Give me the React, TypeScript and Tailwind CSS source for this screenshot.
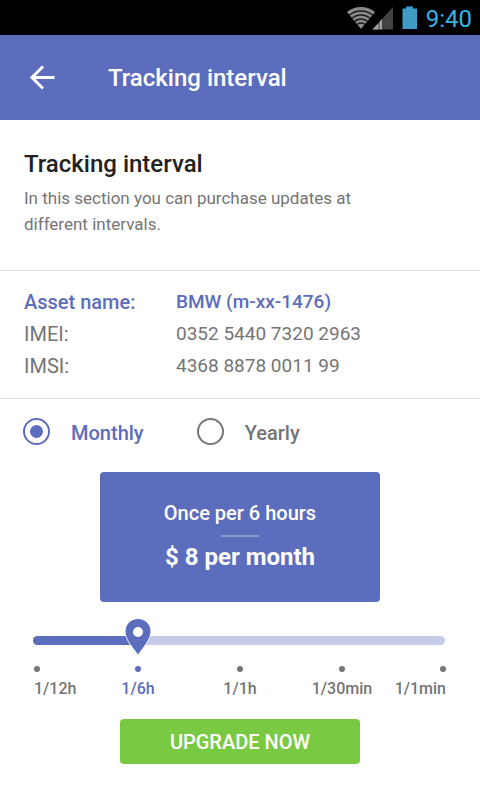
import { useState } from "react";

const intervals = [
  { label: "1/12h", title: "Once per 12 hours", price: 4 },
  { label: "1/6h", title: "Once per 6 hours", price: 8 },
  { label: "1/1h", title: "Once per hour", price: 16 },
  { label: "1/30min", title: "Once per 30 minutes", price: 24 },
  { label: "1/1min", title: "Once per minute", price: 40 },
];

const asset = [
  { name: "Asset name:", value: "BMW (m-xx-1476)", strong: true },
  { name: "IMEI:", value: "0352 5440 7320 2963", strong: false },
  { name: "IMSI:", value: "4368 8878 0011 99", strong: false },
];

function StatusBar() {
  return (
    <div className="flex h-[35px] items-center justify-end bg-black pr-2">
      <svg width="48" height="24" viewBox="0 0 48 24" aria-hidden="true">
        <clipPath id="wifi-fan">
          <path d="M1 6A22 22 0 0 1 29 6L15 23Z" />
        </clipPath>
        <g clipPath="url(#wifi-fan)">
          <rect width="30" height="24" fill="#8b8b8b" />
          <g fill="none" stroke="#1c1c1c" strokeWidth="1.3">
            <circle cx="15" cy="23" r="18" />
            <circle cx="15" cy="23" r="14" />
            <circle cx="15" cy="23" r="10" />
            <circle cx="15" cy="23" r="6" />
          </g>
        </g>
        <path d="M47 1V23.500H26.500Z" fill="#424242" />
        <path d="M26.500 23.500L32.500 16.900V23.500Z" fill="#a0a0a0" />
        <path d="M33.500 15.800L36 13V23.500H33.500Z" fill="#a0a0a0" />
      </svg>
      <svg className="ml-2" width="16" height="24" viewBox="0 0 16 24" aria-hidden="true">
        <path d="M4 0.500H11V2.500H15V23H0.500V2.500H4Z" fill="#3f9cc6" />
      </svg>
      <span className="ml-2 pt-0.5 text-2xl text-[#33b5e5]">9:40</span>
    </div>
  );
}

function Pin() {
  return (
    <svg width="30" height="38" viewBox="0 0 30 38" aria-hidden="true">
      <path
        d="M15 1C8 1 2.500 6.400 2.500 13.300C2.500 21.500 10.500 30 15 36.500C19.500 30 27.500 21.500 27.500 13.300C27.500 6.400 22 1 15 1Z"
        fill="#5c6dbd"
        stroke="#fff"
        strokeWidth="2"
        paintOrder="stroke"
      />
      <circle cx="15" cy="14" r="5" fill="#fff" />
    </svg>
  );
}

export default function App() {
  const [plan, setPlan] = useState("Monthly");
  const [step, setStep] = useState(1);
  const current = intervals[step];
  const percent = `${(step / (intervals.length - 1)) * 100}%`;

  return (
    <div className="min-h-screen bg-white font-['Roboto',sans-serif] text-[#757575]">
      <StatusBar />
      <header className="flex h-[85px] items-center bg-[#5c6dbd] pl-7 text-white">
        <button type="button" aria-label="Back" className="flex size-7 items-center justify-center">
          <svg width="28" height="28" viewBox="0 0 28 28" fill="none" stroke="currentColor" strokeWidth="3" aria-hidden="true">
            <path d="M26.500 13.500H4M15 2.500L4 13.500L15 24.500" />
          </svg>
        </button>
        <h1 className="ml-[52px] text-2xl font-medium">Tracking interval</h1>
      </header>

      <main>
        <section className="border-b border-[#e0e0e0] px-6 pt-7 pb-[33px]">
          <h2 className="text-2xl font-medium text-[#212121]">Tracking interval</h2>
          <p className="mt-[5px] max-w-[350px] text-[17px] leading-[26px]">
            In this section you can purchase updates at different intervals.
          </p>
        </section>

        <dl className="border-b border-[#e0e0e0] px-6 pt-[15px] pb-4 text-xl leading-8">
          {asset.map((row) => (
            <div key={row.name} className={row.strong ? "flex font-medium text-[#5c6dbd]" : "flex"}>
              <dt className="w-[152px]">{row.name}</dt>
              <dd className="text-[19px]">{row.value}</dd>
            </div>
          ))}
        </dl>

        <fieldset className="flex gap-[53px] px-[23px] pt-4 text-xl font-medium">
          {["Monthly", "Yearly"].map((name) => (
            <label key={name} className="flex items-center has-checked:text-[#5c6dbd]">
              <input
                type="radio"
                name="plan"
                value={name}
                checked={plan === name}
                onChange={() => setPlan(name)}
                className="grid size-[27px] appearance-none place-items-center rounded-full border-2 border-current before:size-[13px] before:rounded-full checked:before:bg-current"
              />
              <span className="ml-[21px] pt-1">{name}</span>
            </label>
          ))}
        </fieldset>

        <section className="mx-[100px] mt-[25px] flex h-[130px] flex-col items-center rounded bg-[#5c6dbd] pt-[27px] text-white">
          <p className="text-xl leading-7 font-medium">{current.title}</p>
          <hr className="mt-2 w-[38px] border-t-2 border-[#8b98d0]" />
          <p className="mt-1 text-2xl font-bold">$ {current.price} per {plan === "Monthly" ? "month" : "year"}</p>
        </section>

        <div className="relative mr-[35px] ml-[33px] mt-[34px] h-[9px] rounded-full bg-[#c5cae9] px-1">
          <div className="relative h-full">
            <div className="-ml-1 h-full rounded-l-full bg-[#5c6dbd]" style={{ width: `calc(${percent} + 4px)` }} />
            <div className="absolute -top-[18px] -translate-x-1/2" style={{ left: percent }}>
              <Pin />
            </div>
          </div>
          <input
            type="range"
            aria-label="Tracking interval"
            min={0}
            max={4}
            value={step}
            onChange={(event) => setStep(Number(event.target.value))}
            className="absolute inset-x-0 -top-4 h-10 w-full cursor-pointer opacity-0"
          />
        </div>

        <ul className="mx-[34px] mt-[21px] grid grid-cols-[53px_1fr_1fr_1fr_53px] text-base font-medium">
          {intervals.map((item, index) => (
            <li
              key={item.label}
              className={`flex flex-col items-center whitespace-nowrap first:items-start last:items-end ${index === step ? "text-[#5c6dbd]" : ""}`}
            >
              <span className="size-[6px] rounded-full bg-current" />
              <span className="mt-[5px]">{item.label}</span>
            </li>
          ))}
        </ul>

        <div className="px-[120px] pt-[18px] pb-9">
          <button type="button" className="h-[45px] w-full rounded bg-[#7ac943] text-xl font-medium text-white">
            UPGRADE NOW
          </button>
        </div>
      </main>
    </div>
  );
}
